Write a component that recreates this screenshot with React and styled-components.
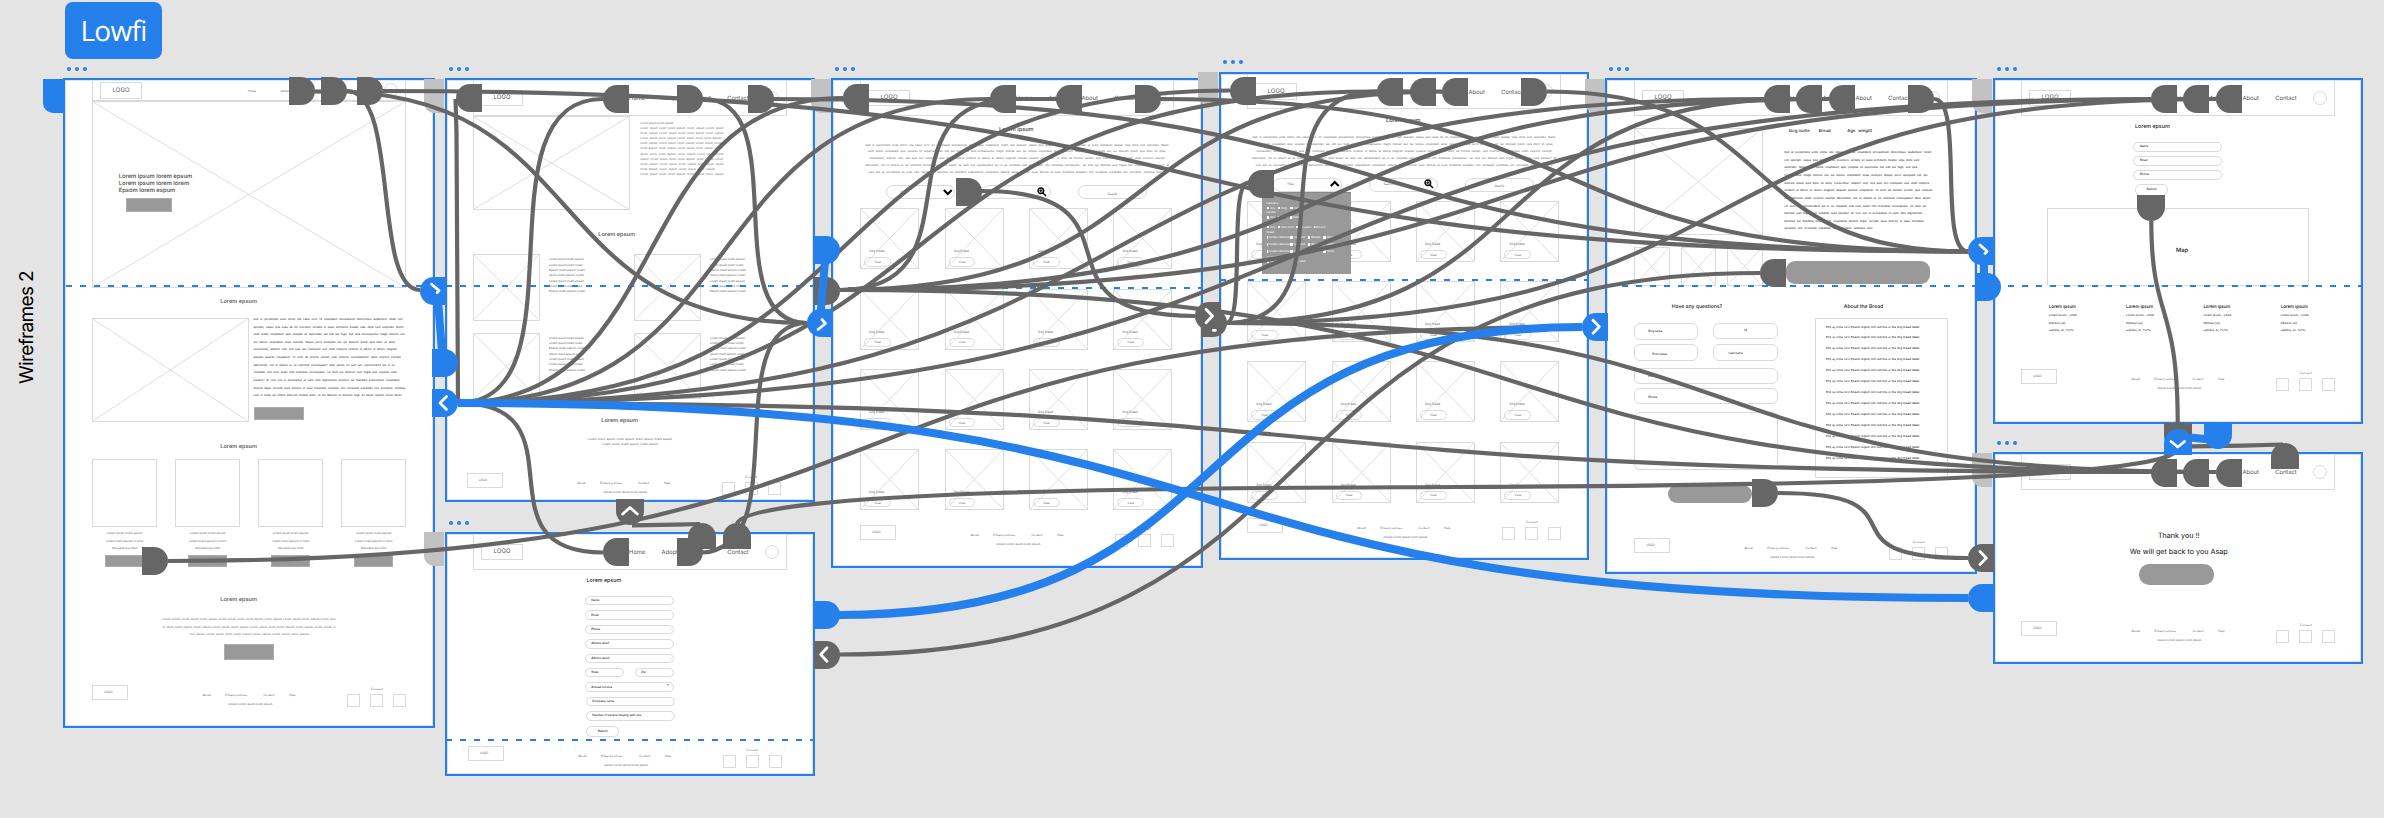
import React from "react";
import styled, { createGlobalStyle, css } from "styled-components";

const BLUE = "#2680eb";
const DARK = "#666666";
const LINE = "#dadada";

const GlobalStyle = createGlobalStyle`
  html, body { margin: 0; padding: 0; background: #e4e4e4; }
  body { font-family: Inter, "Liberation Sans", sans-serif; text-rendering: geometricPrecision; }
  * { box-sizing: border-box; }
`;

/* ---------- canvas ---------- */

const Canvas = styled.main`
  position: relative;
  width: 2384px;
  height: 818px;
  overflow: hidden;
  background: #e4e4e4;
`;

const FlowBadge = styled.div`
  position: absolute;
  left: 65px;
  top: 2px;
  width: 97px;
  height: 57px;
  border-radius: 8px;
  background: ${BLUE};
  color: #fff;
  font: 400 28px "Open Sans", sans-serif;
  letter-spacing: -0.7px;
  display: flex;
  align-items: center;
  justify-content: center;
`;

const FlowTitle = styled.h1`
  position: absolute;
  left: 14px;
  top: 272px;
  margin: 0;
  height: 112px;
  writing-mode: vertical-rl;
  transform: rotate(180deg);
  font: 400 19px/26px Inter, sans-serif;
  letter-spacing: -0.65px;
  white-space: nowrap;
  color: #000;
`;

const Frame = styled.section`
  position: absolute;
  left: ${(p) => p.$x}px;
  top: ${(p) => p.$y}px;
  width: ${(p) => p.$w}px;
  height: ${(p) => p.$h}px;
`;

const Dots = styled.div`
  position: absolute;
  left: 4px;
  top: ${(p) => p.$top}px;
  display: flex;
  gap: 3.8px;
`;

const Dot = styled.i`
  width: 4px;
  height: 4px;
  border-radius: 50%;
  background: ${BLUE};
`;

const Sheet = styled.div`
  width: 100%;
  height: 100%;
  padding: 0 0 0 ${(p) => p.$pad}px;
  border: 2px solid ${BLUE};
  background: #fff;
  box-shadow: inset 0 0 0 1px rgba(0, 0, 0, 0.12);
  display: flex;
  flex-direction: column;
  align-items: flex-start;
  overflow: hidden;
`;

const Fold = styled.div`
  position: absolute;
  left: ${(p) => p.$start}px;
  right: 1px;
  top: ${(p) => p.$at}px;
  height: 2px;
  background: repeating-linear-gradient(90deg, ${BLUE} 0 6px, transparent 6px 14px);
`;

const Artboard = ({ x, y, w = 370, h, pad = 26.3, dots = -11, fold, foldStart = 1, children }) => (
  <Frame $x={x} $y={y} $w={w} $h={h}>
    <Dots $top={dots}><Dot /><Dot /><Dot /></Dots>
    <Sheet $pad={pad}>{children}</Sheet>
    {fold && <Fold $at={fold} $start={foldStart} />}
  </Frame>
);

/* ---------- wireframe parts ---------- */

const offset = css`
  margin-top: ${(p) => p.$mt || 0}px;
  margin-left: ${(p) => p.$ml || 0}px;
  flex: none;
`;

const HeaderBar = styled.header`
  width: 313.5px;
  height: ${(p) => p.$h}px;
  border: 1px solid ${LINE};
  border-top-color: #e8e8e8;
  padding-left: 7px;
  display: flex;
  align-items: center;
  flex: none;
`;

const LogoBox = styled.div`
  width: 41.5px;
  height: 16.5px;
  border: 1px solid ${LINE};
  font-size: 6px;
  color: #555;
  display: flex;
  align-items: center;
  justify-content: center;
  flex: none;
`;

const NavLinks = styled.nav`
  display: flex;
  margin-left: ${(p) => (p.$compact ? 106 : 106.3)}px;
  font-size: ${(p) => (p.$compact ? 2.9 : 5.8)}px;
  color: #555;
  padding-top: 2px;
`;

const NavLink = styled.a`
  width: ${(p) => p.$w}px;
  white-space: nowrap;
`;

const Avatar = styled.span`
  width: 14px;
  height: 14px;
  border: 1px solid ${LINE};
  border-radius: 50%;
`;

const Header = ({ h = 35.5 }) => (
  <HeaderBar $h={h}>
    <LogoBox>LOGO</LogoBox>
    <NavLinks>
      <NavLink $w={32.4}>Home</NavLink>
      <NavLink $w={33}>Adopt</NavLink>
      <NavLink $w={32.7}>About</NavLink>
      <NavLink $w={37.5}>Contact</NavLink>
    </NavLinks>
    <Avatar />
  </HeaderBar>
);

const CompactHeader = () => (
  <HeaderBar $h={20.6}>
    <LogoBox>LOGO</LogoBox>
    <NavLinks $compact>
      <NavLink $w={32.7}>Home</NavLink>
      <NavLink $w={33}>Adopt</NavLink>
      <NavLink $w={32.7}>About</NavLink>
      <NavLink $w={37.6}>Contact</NavLink>
    </NavLinks>
    <Avatar />
  </HeaderBar>
);

const FooterRow = styled.footer`
  position: relative;
  left: ${(p) => p.$shift || 0}px;
  display: flex;
  align-items: flex-start;
  height: 21.5px;
  margin-top: auto;
  margin-bottom: ${(p) => p.$bottom}px;
  font-size: 2.95px;
  line-height: 4px;
  color: #555;
  flex: none;
`;

const FooterLogo = styled.div`
  width: 35.7px;
  height: 14.7px;
  border: 1px solid ${LINE};
  padding: 4px 0 0 11px;
`;

const FooterMiddle = styled.div`
  margin: 8px 0 0 74.5px;
  width: 145px;
`;

const FooterLinks = styled.div`
  display: flex;
`;

const FooterNote = styled.div`
  margin: 5px 0 0 26px;
  font-size: 2.75px;
  white-space: nowrap;
`;

const FooterSocial = styled.div`
  padding-top: 2px;
  text-align: center;
  width: 58.5px;
`;

const SocialBoxes = styled.div`
  display: flex;
  justify-content: space-between;
  margin-top: 2.5px;
`;

const SocialBox = styled.i`
  width: 13px;
  height: 13px;
  border: 1px solid ${LINE};
`;

const Footer = ({ bottom, shift }) => (
  <FooterRow $bottom={bottom} $shift={shift}>
    <FooterLogo>LOGO</FooterLogo>
    <FooterMiddle>
      <FooterLinks>
        <NavLink $w={22.8}>About</NavLink>
        <NavLink $w={38.2}>Privacy policies</NavLink>
        <NavLink $w={25.8}>Contact</NavLink>
        <NavLink $w={10}>Help</NavLink>
      </FooterLinks>
      <FooterNote>espum Lorem ipsum lorem epsum</FooterNote>
    </FooterMiddle>
    <FooterSocial>
      Connect
      <SocialBoxes><SocialBox /><SocialBox /><SocialBox /></SocialBoxes>
    </FooterSocial>
  </FooterRow>
);

const Picture = styled.div`
  position: relative;
  width: ${(p) => p.$w}px;
  height: ${(p) => p.$h}px;
  border: 1px solid ${LINE};
  ${offset}
`;

const CrossSvg = styled.svg`
  position: absolute;
  inset: 0;
  width: 100%;
  height: 100%;
`;

const Crossed = ({ w, h, mt, ml, children }) => (
  <Picture $w={w} $h={h} $mt={mt} $ml={ml}>
    <CrossSvg stroke="#d6d6d6" strokeWidth="0.8">
      <line x1="0" y1="0" x2="100%" y2="100%" />
      <line x1="100%" y1="0" x2="0" y2="100%" />
    </CrossSvg>
    {children}
  </Picture>
);

const Heading = styled.h2`
  margin: 0;
  ${offset}
  font-size: ${(p) => p.$size || 5.6}px;
  font-weight: ${(p) => p.$weight || 600};
  line-height: 8px;
  color: ${(p) => p.$color || "#666"};
  white-space: nowrap;
`;

const TextBlock = styled.div`
  ${offset}
  width: ${(p) => (p.$w ? p.$w + "px" : "auto")};
  display: flex;
  flex-direction: column;
  align-items: ${(p) => (p.$center ? "center" : "flex-start")};
  font-size: ${(p) => p.$size || 2.85}px;
  font-weight: ${(p) => p.$weight || 400};
  line-height: ${(p) => p.$pitch}px;
  color: ${(p) => p.$color || "#5a5a5a"};
`;

const TextLine = styled.span`
  display: block;
  height: ${(p) => p.$pitch}px;
  width: ${(p) => (p.$w ? p.$w + "px" : "auto")};
  text-align-last: ${(p) => (p.$w ? "justify" : "auto")};
  white-space: ${(p) => (p.$w ? "normal" : "nowrap")};
`;

const Lines = ({ lines, pitch, ...rest }) => {
  const styles = Object.fromEntries(Object.entries(rest).map(([k, v]) => ["$" + k, v]));
  return (
    <TextBlock $pitch={pitch} {...styles}>
      {lines.map((l, i) => {
        const [text, w] = Array.isArray(l) ? l : [l];
        return <TextLine key={i} $pitch={pitch} $w={w}>{text}</TextLine>;
      })}
    </TextBlock>
  );
};

const SolidButton = styled.div`
  ${offset}
  width: ${(p) => p.$w}px;
  height: ${(p) => p.$h}px;
  border-radius: ${(p) => p.$r || 0}px;
  background: #999;
  border: ${(p) => (p.$r ? "none" : "1px solid #acacac")};
`;

const Split = styled.div`
  display: flex;
  align-items: flex-start;
  height: ${(p) => p.$h}px;
  gap: ${(p) => p.$gap || 0}px;
  ${offset}
`;

const Column = styled.div`
  ${offset}
  width: ${(p) => (p.$w ? p.$w + "px" : "auto")};
  display: flex;
  flex-direction: column;
  align-items: ${(p) => (p.$center ? "center" : "flex-start")};
`;

const FieldBox = styled.div`
  ${offset}
  width: ${(p) => p.$w}px;
  height: ${(p) => p.$h}px;
  border: 1px solid ${LINE};
  border-radius: ${(p) => p.$r || 6}px;
  padding-left: ${(p) => p.$inset || 0}px;
  padding-top: ${(p) => p.$drop || 0}px;
  display: flex;
  align-items: center;
  justify-content: ${(p) => (p.$inset ? "flex-start" : "center")};
  background: ${(p) => (p.$clear ? "transparent" : "#fff")};
  font-size: 2.95px;
  font-weight: ${(p) => (p.$color ? 400 : 500)};
  line-height: 3px;
  color: ${(p) => p.$color || "#111"};
  white-space: nowrap;
`;

const Caret = styled.span`
  margin: -3px 4px 0 auto;
  font-size: 4px;
`;

const Form = styled.div`
  ${offset}
  display: flex;
  flex-direction: column;
  gap: ${(p) => p.$gap}px;
`;

const lorem = [
  "Lorem ipsum lorem epsum",
  "Lorem lorem epsum lo hjrhc",
  "Opsuiehk kjuj chkh",
];

const Finibus = [
  ["Sed ut perspiciatis unde omnis iste natus error sit voluptatem accusantium doloremque laudantium, totam rem", 149],
  ["aperiam, eaque ipsa quae ab illo inventore veritatis et quasi architecto beatae vitae dicta sunt explicabo. Nemo", 150],
  ["enim ipsam voluptatem quia voluptas sit aspernatur aut odit aut fugit, sed quia consequuntur magni dolores eos", 151],
  ["qui ratione voluptatem sequi nesciunt. Neque porro quisquam est, qui dolorem ipsum quia dolor sit amet,", 142],
  ["consectetur, adipisci velit, sed quia non numquam eius modi tempora incidunt ut labore et dolore magnam", 143.5],
  ["aliquam quaerat voluptatem. Ut enim ad minima veniam, quis nostrum exercitationem ullam corporis suscipit", 147],
  ["laboriosam, nisi ut aliquid ex ea commodi consequatur? Quis autem vel eum iure reprehenderit qui in ea", 141],
  ["voluptate velit esse quam nihil molestiae consequatur, vel illum qui dolorem eum fugiat quo voluptas nulla", 143],
  ["pariatur? At vero eos et accusamus et iusto odio dignissimos ducimus qui blanditiis praesentium voluptatum", 146],
  ["deleniti atque corrupti quos dolores et quas molestias excepturi sint occaecati cupiditate non provident, similique", 152],
  ["sunt in culpa qui officia deserunt mollitia animi, id est laborum et dolorum fuga. Et harum quidem rerum facilis", 148],
];

const breedText = [
  ["Sed ut perspiciatis unde omnis iste natus error sit voluptatem accusantium doloremque laudantium, totam", 147],
  ["rem aperiam, eaque ipsa quae ab illo inventore veritatis et quasi architecto beatae vitae dicta sunt", 135],
  ["explicabo. Nemo enim ipsam voluptatem quia voluptas sit aspernatur aut odit aut fugit, sed quia", 133],
  ["consequuntur magni dolores eos qui ratione voluptatem sequi nesciunt. Neque porro quisquam est, qui", 143],
  ["dolorem ipsum quia dolor sit amet, consectetur, adipisci velit, sed quia non numquam eius modi tempora", 145],
  ["incidunt ut labore et dolore magnam aliquam quaerat voluptatem. Ut enim ad minima veniam, quis nostrum", 148],
  ["exercitationem ullam corporis suscipit laboriosam, nisi ut aliquid ex ea commodi consequatur? Quis autem", 146],
  ["vel eum iure reprehenderit qui in ea voluptate velit esse quam nihil molestiae consequatur, vel illum qui", 142],
  ["dolorem eum fugiat quo voluptas nulla pariatur? At vero eos et accusamus et iusto odio dignissimos", 138],
  ["ducimus qui blanditiis praesentium voluptatum deleniti atque corrupti quos dolores et quas molestias", 139.5],
  ["excepturi sint occaecati cupiditate non provident, similique sunt", 88],
];

const introText = [
  ["Sed ut perspiciatis unde omnis iste natus error sit voluptatem accusantium doloremque laudantium, totam rem aperiam, eaque ipsa quae ab illo inventore veritatis et quasi architecto beatae vitae dicta sunt explicabo. Nemo", 303],
  ["enim ipsam voluptatem quia voluptas sit aspernatur aut odit aut fugit, sed quia consequuntur magni dolores eos qui ratione voluptatem sequi nesciunt. Neque porro quisquam est, qui dolorem ipsum quia dolor sit amet,", 298],
  ["consectetur, adipisci velit, sed quia non numquam eius modi tempora incidunt ut labore et dolore magnam aliquam quaerat voluptatem. Ut enim ad minima veniam, quis nostrum exercitationem ullam corporis suscipit", 295],
  ["laboriosam, nisi ut aliquid ex ea commodi consequatur? Quis autem vel eum iure reprehenderit qui in ea voluptate velit esse quam nihil molestiae consequatur, vel illum qui dolorem eum fugiat quo voluptas nulla pariatur? At", 304],
  ["vero eos et accusamus et iusto odio dignissimos ducimus qui blanditiis praesentium voluptatum deleniti atque corrupti quos dolores et quas molestias excepturi sint occaecati cupiditate non provident, similique sunt in", 297],
];

/* ---------- screens ---------- */

const HomeScreen = () => (
  <Artboard x={63} y={78} w={372} h={650} pad={27.3} fold={207} foldStart={3}>
    <CompactHeader />
    <Crossed w={313.5} h={187}>
      <Lines
        mt={71} ml={25.5} pitch={7.4} size={5.75} weight={600}
        lines={["Lorem ipsum lorem epsum", "Lorem ipsum lorem lorem", "Epsom lorem espum"]}
      />
      <SolidButton $mt={3.4} $ml={33} $w={45.7} $h={13.6} />
    </Crossed>
    <Heading $mt={10.4} $ml={128}>Lorem epsum</Heading>
    <Split $mt={12} $h={103.6}>
      <Crossed w={156.5} h={103.8} />
      <Column $ml={4.8} $mt={-2}>
        <Lines pitch={7.63} size={2.62} color="#111" lines={Finibus} />
        <SolidButton $mt={7} $w={50.3} $h={13} />
      </Column>
    </Split>
    <Heading $mt={21.4} $ml={128}>Lorem epsum</Heading>
    <Split $mt={8.3} $h={107.5} $gap={18}>
      {[0, 1, 2, 3].map((i) => (
        <Column key={i} $center>
          <Picture $w={65} $h={67.4} />
          <Lines mt={3.5} pitch={7.6} center lines={lorem} />
          <SolidButton $mt={2} $w={39} $h={11.7} />
        </Column>
      ))}
    </Split>
    <Heading $mt={29.2} $ml={128}>Lorem epsum</Heading>
    <Lines
      mt={12.2} w={313.5} center pitch={7.6} size={2.75}
      lines={[
        ["Lorem ipsum Lorem ipsum lorem epsum Lorem ipsum lorem lorem Epsom lorem espum Lorem ipsum lorem epsum Lorem ipsu", 173],
        ["m lorem lorem Epsom lorem espum Lorem ipsum lorem epsum Lorem ipsum lorem lorem Epsom lorem espum Lorem ipsum lo", 173],
        ["rem epsum Lorem ipsum lorem lorem Epsom lorem espum Lorem ipsum lorem epsum", 119],
      ]}
    />
    <SolidButton $mt={5} $ml={131.7} $w={50} $h={15.8} />
    <Footer bottom={19.5} />
  </Artboard>
);

const storyLines = [
  "Lorem ipsum lorem epsum",
  ["Lorem ipsum lorem lorem Epsom lorem espum Lorem ipsum", 83],
  ["lorem epsum Lorem ipsum lorem lorem Epsom lorem espum", 83],
  ["Lorem ipsum lorem epsum Lorem ipsum lorem lorem Epsom", 81],
  ["lorem espum Lorem ipsum lorem epsum Lorem ipsum lorem", 81],
  ["lorem Epsom lorem espum Lorem ipsum lorem epsum Lorem", 82],
  ["ipsum lorem lorem Epsom lorem espum Lorem ipsum lorem", 83],
  ["epsum Lorem ipsum lorem lorem Epsom lorem espum Lorem", 83],
  ["lorem espum Lorem ipsum lorem epsum lorem lorem ipsum", 83],
  ["lorem Epsom lorem espum Lorem ipsum lorem epsum", 74.5],
  ["Lorem ipsum lorem lorem Epsom lorem espum lorem espum", 83],
];

const memberLines = [
  "Lorem ipsum lorem epsum",
  "Lorem ipsum lorem lorem",
  "Epsom lorem espum Lorem",
  "ipsum lorem epsum Lorem",
  "Lorem ipsum lorem epsum",
  "Lorem ipsum lorem lorem",
  "Epsom lorem espum Lorem",
];

const MemberRow = ({ mt }) => (
  <Split $mt={mt} $h={66.5}>
    <Crossed w={66.5} h={66.5} />
    <Lines mt={3.4} ml={9.2} w={85.2} pitch={5.3} size={2.8} lines={memberLines} />
    <Crossed w={67.3} h={66.5} />
    <Lines mt={3.4} ml={8.5} pitch={5.3} size={2.8} lines={memberLines} />
  </Split>
);

const AboutScreen = () => (
  <Artboard x={445} y={78} h={424} fold={207}>
    <Header />
    <Split $h={93.5}>
      <Crossed w={156.5} h={94} />
      <Lines mt={5} ml={10.5} pitch={5.2} size={2.65} lines={storyLines} />
    </Split>
    <Heading $mt={21.5} $ml={125}>Lorem epsum</Heading>
    <MemberRow mt={15.5} />
    <MemberRow mt={12} />
    <Heading $mt={18.4} $ml={128}>Lorem epsum</Heading>
    <Lines
      mt={11.8} w={313.5} center pitch={5.2} size={2.8}
      lines={[["Lorem lorem epsum lorem epsum lorem epsum lorem epsum", 84], ["Lorem ipsum lorem epsum lorem epsum", 56]]}
    />
    <Footer bottom={5.2} shift={-6.3} />
  </Artboard>
);

const AdoptFormScreen = () => (
  <Artboard x={445} y={532} h={244} fold={207}>
    <Header />
    <Heading $mt={7.5} $ml={113.3} $size={5.3} $weight={500} $color="#222">Lorem epsum</Heading>
    <Form $mt={11} $ml={111.5} $gap={5}>
      {["Name", "Email", "Phone", "Adress lane1", "Adress lane2"].map((t) => (
        <FieldBox key={t} $w={89.5} $h={9.4} $inset={5.5}>{t}</FieldBox>
      ))}
      <Split $h={9.4} $gap={11.5}>
        <FieldBox $w={39} $h={9.4} $inset={5.5}>State</FieldBox>
        <FieldBox $w={39} $h={9.4} $inset={5}>Zip</FieldBox>
      </Split>
      <FieldBox $w={89.5} $h={9.4} $inset={5.5}>Annual Income<Caret>⌃</Caret></FieldBox>
      <FieldBox $w={89.5} $h={9.4} $ml={1} $inset={5.5}>Company name</FieldBox>
      <FieldBox $w={89.5} $h={9.4} $ml={1} $inset={5.5}>Number of people staying with you</FieldBox>
      <FieldBox $w={33.5} $h={11.4} $ml={1}>Submit</FieldBox>
    </Form>
    <Footer bottom={6.5} shift={-5.3} />
  </Artboard>
);

const FilterRow = styled.div`
  ${offset}
  display: flex;
  gap: 27px;
  height: 14px;
`;

const FilterIcon = styled.svg`
  position: absolute;
  left: ${(p) => p.$left}px;
  top: 1.8px;
  width: 9.6px;
  height: 9.6px;
  fill: none;
  stroke: #000;
`;

const FilterSlot = styled.div`
  position: relative;
`;

const CardGrid = styled.div`
  ${offset}
  display: grid;
  grid-template-columns: repeat(4, 59px);
  column-gap: 25.4px;
  row-gap: 19.2px;
`;

const DogCard = () => (
  <Crossed w={59} h={61}>
    <Lines mt={39} ml={8} pitch={6} size={3} lines={["Dog Breed"]} />
    <FieldBox $w={26.6} $h={9.4} $mt={3} $ml={3} $drop={1} $color="#555" $clear>View</FieldBox>
  </Crossed>
);

const MenuPanel = styled.div`
  position: absolute;
  left: ${(p) => p.$x}px;
  top: ${(p) => p.$y}px;
  width: 88.5px;
  height: 81.5px;
  background: #999;
  border-top: 1px solid #888;
  padding: 7.5px 0 0 4.5px;
  color: #fff;
  font-size: 2.8px;
  line-height: 4.9px;
`;

const MenuTitle = styled.div`
  height: 4.7px;
`;

const MenuRow = styled.div`
  display: flex;
  align-items: center;
  height: ${(p) => p.$h}px;
`;

const MenuOption = styled.label`
  width: ${(p) => p.$w}px;
  display: flex;
  align-items: center;
  gap: 1px;
  white-space: nowrap;
`;

const MenuBox = styled.i`
  width: 2.7px;
  height: 2.7px;
  background: #fff;
`;

const menuGroups = [
  ["Category", [[["Any", 11], ["Dog", 12.5], ["Cat", 12]]], 5],
  ["Gender", [[["Any", 11], ["Male", 12.5], ["Female", 12]]], 4.7],
  ["Age", [[["Any", 11], ["New born", 18], ["1-3 years", 18], ["Above 5", 12]]], 5],
  ["Breed", [
    [["Golden retriever", 23.5], ["Labrador", 17.5], ["Beagle", 15.5], ["Other", 12]],
    [["Golden retriever", 23.5], ["Labrador", 17.5], ["Beagle", 15.5], ["Bulldog", 12]],
    [["Golden retriever", 23.5], ["Labrador", 17.5], ["Beagle", 15.5], ["Other", 12]],
  ], 6.9],
  ["Availability", [[["Now", 29], ["Later", 12]]], 3.5],
];

const FilterMenu = ({ x, y }) => (
  <MenuPanel $x={x} $y={y}>
    {menuGroups.map(([title, rows, h]) => (
      <React.Fragment key={title}>
        <MenuTitle>{title}</MenuTitle>
        {rows.map((row, i) => (
          <MenuRow key={i} $h={h}>
            {row.map(([t, w]) => <MenuOption key={t} $w={w}><MenuBox />{t}</MenuOption>)}
          </MenuRow>
        ))}
      </React.Fragment>
    ))}
  </MenuPanel>
);

const SearchScreen = ({ x, y, w, h, pad, fold, foldStart, dots, headerH, gaps, open, footer }) => (
  <Artboard x={x} y={y} w={w} h={h} pad={pad} fold={fold} foldStart={foldStart} dots={dots}>
    <Header h={headerH} />
    <Heading $mt={gaps[0]} $ml={138.7} $weight={500} $color="#444">Lorem ipsum</Heading>
    <Lines mt={gaps[1]} w={313.5} center pitch={6.8} size={2.6} lines={introText} />
    <FilterRow $mt={gaps[2]} $ml={25.7}>
      <FilterSlot>
        <FieldBox $w={69} $h={14} $r={7} $inset={13.5} $color="#555">Filter</FieldBox>
        <FilterIcon $left={57} viewBox="0 0 9 9" strokeWidth="2">
          <path d={open ? "M0.8 6.6 4.5 2.8 8.2 6.6" : "M0.8 2.8 4.5 6.6 8.2 2.8"} />
        </FilterIcon>
      </FilterSlot>
      <FilterSlot>
        <FieldBox $w={69} $h={14} $r={7} $inset={13.5} $color="#555">Search</FieldBox>
        <FilterIcon $left={55} viewBox="0 0 9 9" strokeWidth="1.4">
          <circle cx="3.6" cy="3.6" r="2.6" />
          <path d="M5.6 5.6 8.5 8.5" />
          <path strokeWidth="1" d="M2.2 3.6H5M3.6 2.2V5" />
        </FilterIcon>
      </FilterSlot>
      <FieldBox $w={69} $h={14} $r={7} $drop={4} $color="#555">Qualify</FieldBox>
    </FilterRow>
    <CardGrid $mt={gaps[3]}>
      {Array.from({ length: 16 }, (_, i) => <DogCard key={i} />)}
    </CardGrid>
    <Footer bottom={footer} />
    {open && <FilterMenu x={43} y={120.3} />}
  </Artboard>
);

const DogFacts = styled.div`
  display: flex;
  height: 8px;
  align-items: center;
  padding-left: 4.7px;
  font-size: 4.3px;
  font-weight: 500;
  color: #111;
`;

const Fact = styled.span`
  width: ${(p) => p.$w}px;
  white-space: nowrap;
`;

const QuestionRow = styled.div`
  display: flex;
  gap: 15px;
  margin-bottom: ${(p) => p.$gap}px;
`;

const BreedBox = styled.div`
  width: 132.4px;
  height: 159.8px;
  margin-left: 37.8px;
  border: 1px solid ${LINE};
  padding: 2.5px 0 0 9.7px;
`;

const DogScreen = () => (
  <Artboard x={1605} y={78} w={372} h={496} pad={27.3} fold={207} foldStart={3}>
    <Header />
    <Split $mt={12} $h={158.5}>
      <Column $w={128.5}>
        <Crossed w={128.5} h={107.3} />
        <Split $mt={12.3} $h={39} $gap={11.2}>
          <Crossed w={35.4} h={39} />
          <Crossed w={35.4} h={39} />
          <Crossed w={35.4} h={39} />
        </Split>
      </Column>
      <Column $ml={21.5}>
        <DogFacts>
          <Fact $w={29.7}>Dog name</Fact>
          <Fact $w={28.5}>Bread</Fact>
          <Fact $w={11}>Age</Fact>
          <Fact $w={14}>weight</Fact>
        </DogFacts>
        <Lines mt={13.7} pitch={7.64} size={2.68} color="#000" lines={breedText} />
        <SolidButton $mt={28} $ml={2} $w={144} $h={23.3} $r={9} />
      </Column>
    </Split>
    <Split $mt={17} $h={8} $ml={37.5}>
      <Heading $size={5.1} $weight={500} $color="#222">Have any questions?</Heading>
      <Heading $ml={121.5} $size={5.1} $weight={500} $color="#222">About the Bread</Heading>
    </Split>
    <Split $mt={7} $h={160}>
      <Column $mt={4.6} $w={143.3}>
        <QuestionRow $gap={4.5}>
          <FieldBox $w={64.2} $h={16.6} $mt={0.7} $inset={13}>Dog name</FieldBox>
          <FieldBox $w={64.2} $h={16.6}>Id</FieldBox>
        </QuestionRow>
        <QuestionRow $gap={6.7}>
          <FieldBox $w={64.2} $h={16.6} $inset={17} $drop={4}>First name</FieldBox>
          <FieldBox $w={64.2} $h={16.6} $inset={14} $drop={2}>Last name</FieldBox>
        </QuestionRow>
        <FieldBox $w={143.3} $h={16.6} $inset={13} $drop={2}>Email</FieldBox>
        <FieldBox $mt={3.5} $w={143.3} $h={16.6} $inset={13} $drop={2}>Phone</FieldBox>
        <FieldBox $mt={7.2} $w={143.3} $h={58} />
      </Column>
      <BreedBox>
        <Lines
          pitch={10.97} size={2.8} color="#000"
          lines={Array.from({ length: 13 }, () => ["Ehtj ujj ocha ioco Epsum loglum lom lisd this is the dog bread detail.", 94])}
        />
      </BreedBox>
    </Split>
    <SolidButton $mt={7} $ml={34} $w={83.7} $h={18} $r={9} />
    <Footer bottom={12.5} />
  </Artboard>
);

const MapBox = styled.div`
  ${offset}
  width: 261.5px;
  height: 77.5px;
  border: 1px solid ${LINE};
  display: flex;
  align-items: center;
  justify-content: center;
  padding: 7px 0 0 8px;
  font-size: 5.7px;
  font-weight: 500;
  color: #111;
`;

const ContactScreen = () => (
  <Artboard x={1993} y={78} h={346} fold={207}>
    <Header />
    <Heading $mt={7.5} $ml={113.8} $size={5.3} $weight={500} $color="#222">Lorem epsum</Heading>
    <Form $mt={11} $ml={111.7} $gap={4.5}>
      <FieldBox $w={89.5} $h={9.6} $inset={6}>Name</FieldBox>
      <FieldBox $w={89.5} $h={9.6} $inset={6}>Email</FieldBox>
      <FieldBox $w={89.5} $h={9.6} $inset={6}>Phone</FieldBox>
      <FieldBox $w={33} $h={11.3} $ml={2}>Submit</FieldBox>
    </Form>
    <MapBox $mt={12.5} $ml={26}>Map</MapBox>
    <Split $mt={18} $ml={27.5} $h={32}>
      {[0, 1, 2, 3].map((i) => (
        <Column key={i} $w={77.3}>
          <Heading $size={4.4} $weight={500} $color="#111">Lorem ipsum</Heading>
          <Lines mt={0.8} pitch={7.5} size={2.9} color="#111" lines={["Lorem ipsum - jchkb", "Kjbhkun jojij", "Gghjbuj, Ar, 72716"]} />
        </Column>
      ))}
    </Split>
    <Footer bottom={31.5} />
  </Artboard>
);

const ThanksScreen = () => (
  <Artboard x={1993} y={452} h={212}>
    <Header />
    <Lines
      mt={38} w={315} center pitch={16} size={7.2} color="#111"
      lines={["Thank you !!", "We will get back to you Asap"]}
    />
    <SolidButton $mt={4.5} $ml={117.7} $w={75} $h={21} $r={10} />
    <Footer bottom={19.5} />
  </Artboard>
);

/* ---------- prototype connections ---------- */

const WireLayer = styled.svg`
  position: absolute;
  left: 0;
  top: 0;
  pointer-events: none;
`;

/* Short spans bend more sharply than long ones. */
const s = (x1, y1, x2, y2) => {
  const dx = x2 - x1;
  const span = Math.abs(dx);
  const k = span < 160 ? 0.9 : span < 230 ? 0.83 : 0.57;
  return `M${x1} ${y1}C${x1 + dx * k} ${y1} ${x2 - dx * k} ${y2} ${x2} ${y2}`;
};

const darkWires = [
  s(383, 91, 1968, 251.5),
  s(325, 91, 807, 323),
  "M347 91C400 91 372 290 420 290",
  "M315 91.5H322",
  "M455.5 99L456.5 133 458 403",
  s(603, 99, 458, 403),
  s(703, 99, 807, 323),
  "M807 323C735 323 770 470 742 526",
  s(458, 403, 843, 98),
  s(458, 403, 990, 99),
  s(458, 403, 1230, 90.5),
  s(458, 403, 1377, 91.5),
  s(458, 403, 1764, 99),
  s(458, 403, 2151, 99),
  s(458, 403, 2151, 472),
  s(458, 403, 603, 552.5),
  s(840, 290, 1016, 99),
  "M1014 99H1058",
  s(840, 290, 1442, 91.5),
  s(840, 290, 1829, 99),
  s(840, 290, 2184, 99),
  s(840, 290, 2184, 472),
  s(1160, 99, 1968, 251.5),
  s(773, 99, 1968, 251.5),
  s(1547, 91.5, 1968, 251.5),
  s(1934, 99, 1968, 251.5),
  s(1226, 323, 1248, 183),
  s(1226, 323, 1377, 91.5),
  "M1401 91.5H1411",
  s(1226, 323, 1797, 99),
  s(1226, 323, 2216, 99),
  s(1226, 323, 2216, 472),
  s(981, 191, 1195, 316),
  s(839, 654.5, 1760, 273),
  s(168, 561, 1582, 327),
  "M737 524C745 486 1300 488 1455 487C1800 486 2140 478 2174 453",
  "M632 525.3L676 524.7 700 524",
  "M703 552.5C712 552.5 720 549 728 543",
  s(1778, 493, 1968, 558),
  "M2151.3 221C2151.3 322 2177.7 300 2177.7 423",
  "M2192 446.3L2243 445.7 2283 444.5",
];

const blueWires = [s(458, 403, 1968, 598), s(839, 615, 1582, 327)];
const blueLinks = ["M438 300L442 352", "M826 250L820 320", "M1984 262V276", "M2190 437.5L2210 439.5"];

const RADII = {
  left: "14px 0 0 14px",
  right: "0 14px 14px 0",
  up: "14px 14px 0 0",
  down: "0 0 14px 14px",
};

const Port = styled.div`
  position: absolute;
  left: ${(p) => p.$x}px;
  top: ${(p) => p.$y}px;
  width: ${(p) => (p.$dir === "up" || p.$dir === "down" ? 28 : 26)}px;
  height: ${(p) => (p.$dir === "up" || p.$dir === "down" ? 26 : 28)}px;
  border-radius: ${(p) => RADII[p.$dir]};
  background: ${(p) => (p.$blue ? BLUE : DARK)};
`;

const Flag = styled.div`
  position: absolute;
  left: ${(p) => p.$x}px;
  top: ${(p) => p.$y}px;
  width: 20px;
  height: 34px;
  border-radius: 0 0 0 10px;
  background: ${(p) => (p.$blue ? BLUE : "#c2c2c2")};
`;

const flags = [
  [424, 79], [424, 532], [811, 79], [1198, 71.5], [1585, 79], [1972, 79], [1972, 453],
];

const ports = [
  [289, 77.3, "right"], [321.3, 77.3, "right"], [357, 77.3, "right"], [142.3, 547, "right"],
  [456, 84, "left"], [603, 85, "left"], [677, 85, "right"], [747.6, 85, "right"],
  [616, 499, "down"], [688, 523, "up"], [723.3, 523, "up"],
  [603, 538.4, "left"], [677, 538.4, "right"],
  [813.5, 276.6, "right"], [814, 640.7, "right"],
  [842.6, 83.8, "left"], [990, 85, "left"], [1055.6, 85, "left"], [1134.6, 85, "right"], [955.8, 177.5, "right"],
  [1194.6, 302, "left"], [1200.7, 309, "right"],
  [1229.8, 76.5, "left"], [1376.8, 77.7, "left"], [1409.6, 77.7, "left"], [1442.3, 77.7, "left"], [1521.3, 77.7, "right"], [1247.5, 170, "left"],
  [1764, 85, "left"], [1796.4, 85, "left"], [1829.3, 85, "left"], [1908.3, 85, "right"],
  [1760, 259, "left"], [1752, 479.4, "right"], [1968.4, 544, "left"],
  [2150.8, 85, "left"], [2183.4, 85, "left"], [2216.4, 85, "left"],
  [2150.8, 459, "left"], [2183.4, 459, "left"], [2216.4, 459, "left"],
  [2137.3, 195, "down"], [2163.8, 422.6, "down"], [2271, 443.3, "up"],
];

const bluePorts = [
  [420, 276.5, "left"], [432.4, 349, "right"], [432.4, 389, "right"],
  [814.4, 236.4, "right"], [807, 309, "left"], [814, 600.7, "right"],
  [1581.6, 313, "left"], [1968, 237.4, "left"], [1974.5, 272.7, "right"],
  [1968.4, 584, "left"], [2163.8, 428.8, "up"], [2203.7, 423, "down"],
];

const chevrons = [
  "M431.6 284.2L439 290.5 437.2 292.6",
  "M446.5 396.5L440 403 446.5 409.5",
  "M622.7 514L630 507.5 637.3 514",
  "M827 647.8L820.7 654.5 827 661.2",
  "M818 329.5L825.5 323.5 822 319.5",
  "M1206 309.3L1212.5 316 1206 322.7",
  "M1213.3 330.3H1215.3",
  "M1593 320.3L1599.3 326.8 1593 333.3",
  "M1980 245L1987 251.3 1985 253.5",
  "M1980 551.5L1986.3 558 1980 564.5",
  "M2171 441.5L2177.7 447 2184.5 441.5",
];

export default function App() {
  return (
    <>
      <GlobalStyle />
      <Canvas>
        <FlowBadge>Lowfi</FlowBadge>
        <FlowTitle>Wireframes 2</FlowTitle>

        <HomeScreen />
        <AboutScreen />
        <AdoptFormScreen />
        <SearchScreen
          x={831} y={78} w={372} h={490} pad={27.3} fold={209} foldStart={3}
          headerH={35.5} gaps={[10, 8.1, 9.6, 9.3]} footer={19.5}
        />
        <SearchScreen
          open x={1219} y={72} w={370} h={488} pad={26.3} fold={207} foldStart={1} dots={-12}
          headerH={34.5} gaps={[8.5, 9.4, 9.2, 9.4]} footer={18.5}
        />
        <DogScreen />
        <ContactScreen />
        <ThanksScreen />

        <Flag $x={43} $y={79} $blue />
        {flags.map(([x, y], i) => <Flag key={i} $x={x} $y={y} />)}

        <WireLayer width="2384" height="818" fill="none">
          <g stroke={DARK} strokeWidth="4.2">
            {darkWires.map((d, i) => <path key={i} d={d} />)}
          </g>
          <g stroke={BLUE} strokeWidth="8.2">
            {blueWires.map((d, i) => <path key={i} d={d} />)}
          </g>
        </WireLayer>

        {ports.map(([x, y, dir], i) => <Port key={i} $x={x} $y={y} $dir={dir} />)}
        {bluePorts.map(([x, y, dir], i) => <Port key={i} $x={x} $y={y} $dir={dir} $blue />)}

        <WireLayer width="2384" height="818" fill="none">
          <g stroke={BLUE} strokeWidth="8">
            {blueLinks.map((d, i) => <path key={i} d={d} />)}
          </g>
          <g stroke="#fff" strokeWidth="2.8" strokeLinecap="round" strokeLinejoin="round">
            {chevrons.map((d, i) => <path key={i} d={d} />)}
          </g>
        </WireLayer>
      </Canvas>
    </>
  );
}
